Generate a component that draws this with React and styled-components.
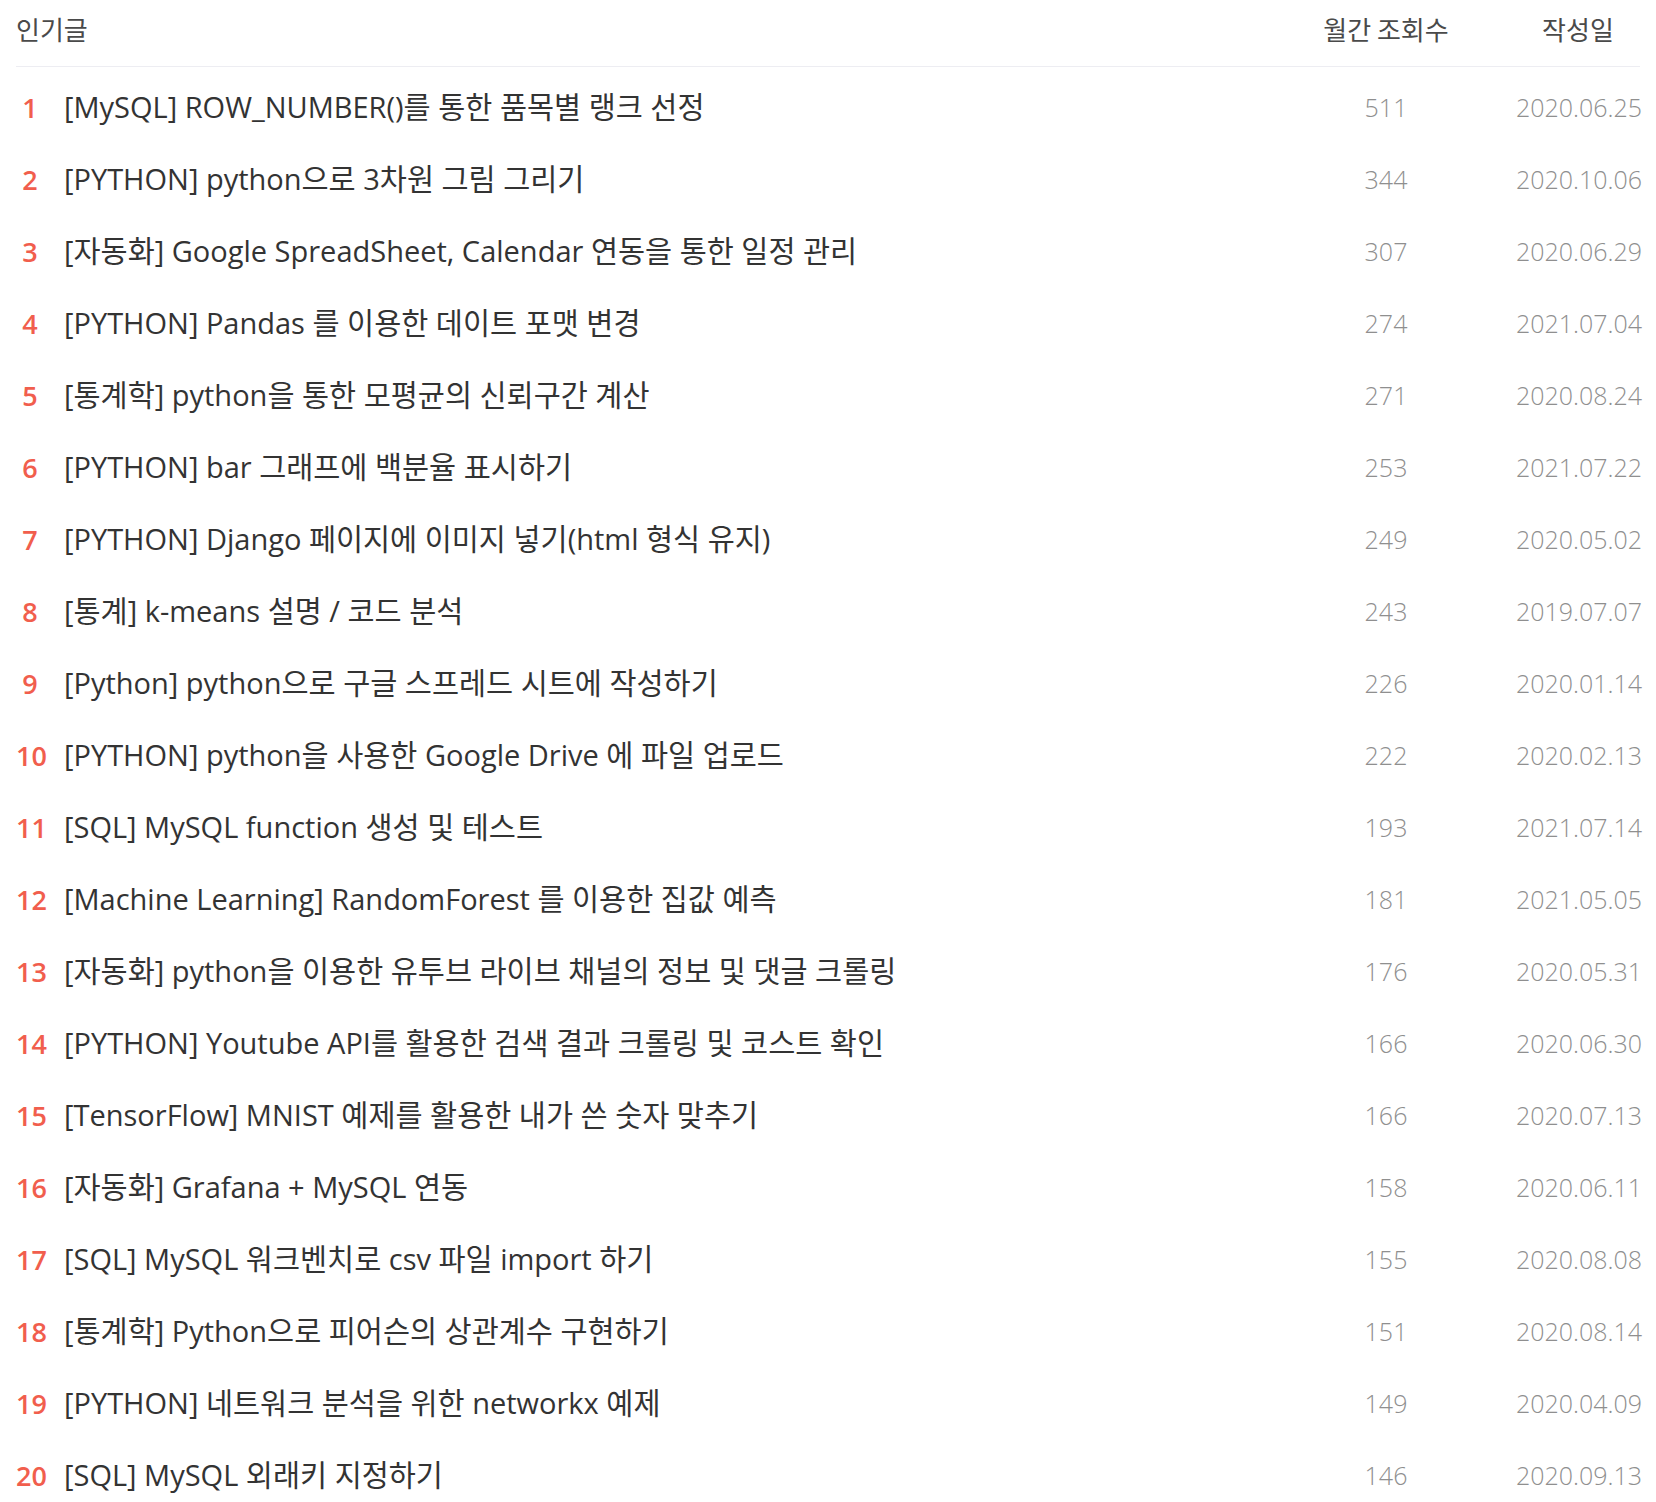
import React from 'react';
import styled, { createGlobalStyle } from 'styled-components';

const GlobalStyle = createGlobalStyle`
  body {
    margin: 0;
    background: #fff;
    font-family: "Open Sans", "Noto Sans CJK KR", sans-serif;
  }
`;

const posts = [
  ['[MySQL] ROW_NUMBER()를 통한 품목별 랭크 선정', 511, '2020.06.25'],
  ['[PYTHON] python으로 3차원 그림 그리기', 344, '2020.10.06'],
  ['[자동화] Google SpreadSheet, Calendar 연동을 통한 일정 관리', 307, '2020.06.29'],
  ['[PYTHON] Pandas 를 이용한 데이트 포맷 변경', 274, '2021.07.04'],
  ['[통계학] python을 통한 모평균의 신뢰구간 계산', 271, '2020.08.24'],
  ['[PYTHON] bar 그래프에 백분율 표시하기', 253, '2021.07.22'],
  ['[PYTHON] Django 페이지에 이미지 넣기(html 형식 유지)', 249, '2020.05.02'],
  ['[통계] k-means 설명 / 코드 분석', 243, '2019.07.07'],
  ['[Python] python으로 구글 스프레드 시트에 작성하기', 226, '2020.01.14'],
  ['[PYTHON] python을 사용한 Google Drive 에 파일 업로드', 222, '2020.02.13'],
  ['[SQL] MySQL function 생성 및 테스트', 193, '2021.07.14'],
  ['[Machine Learning] RandomForest 를 이용한 집값 예측', 181, '2021.05.05'],
  ['[자동화] python을 이용한 유투브 라이브 채널의 정보 및 댓글 크롤링', 176, '2020.05.31'],
  ['[PYTHON] Youtube API를 활용한 검색 결과 크롤링 및 코스트 확인', 166, '2020.06.30'],
  ['[TensorFlow] MNIST 예제를 활용한 내가 쓴 숫자 맞추기', 166, '2020.07.13'],
  ['[자동화] Grafana + MySQL 연동', 158, '2020.06.11'],
  ['[SQL] MySQL 워크벤치로 csv 파일 import 하기', 155, '2020.08.08'],
  ['[통계학] Python으로 피어슨의 상관계수 구현하기', 151, '2020.08.14'],
  ['[PYTHON] 네트워크 분석을 위한 networkx 예제', 149, '2020.04.09'],
  ['[SQL] MySQL 외래키 지정하기', 146, '2020.09.13'],
];

const Board = styled.div`
  padding: 0 16px;
`;

const Head = styled.div`
  display: grid;
  grid-template-columns: 1fr 260px 124px;
  align-items: center;
  padding: 12px 0 20px;
  border-bottom: 1px solid #ededf2;
  color: #4a4a4a;
  font-family: "Noto Sans CJK KR", sans-serif;
  font-size: 26px;
  font-weight: 400;
  line-height: 34px;
`;

const HeadCell = styled.div`
  text-align: ${(p) => (p.center ? 'center' : 'left')};
  white-space: nowrap;
`;

const List = styled.ol`
  list-style: none;
  margin: 0;
  padding: 4px 0 0;
`;

const Row = styled.li`
  display: grid;
  grid-template-columns: 48px 1fr 260px 124px;
  align-items: center;
  height: 72px;
`;

const Rank = styled.span`
  padding-right: 20px;
  text-align: center;
  color: #f15e4d;
  font-size: 27px;
  font-weight: 600;
  white-space: nowrap;
`;

const Title = styled.span`
  color: #333;
  font-size: 29px;
  font-weight: 400;
  line-height: 40px;
  white-space: nowrap;
`;

// Hangul runs get their own face, a touch larger, like the reference's Korean font
const Hangul = styled.span`
  font-family: "Noto Sans CJK KR", sans-serif;
  font-size: 1.015em;
  font-weight: 400;
  line-height: 1;
`;

const Meta = styled.span`
  text-align: center;
  color: #8f8f8f;
  font-size: 25px;
  font-weight: 300;
  white-space: nowrap;
`;

const splitHangul = (text) =>
  text.split(/([가-힣]+)/).map((part, i) =>
    /[가-힣]/.test(part) ? <Hangul key={i}>{part}</Hangul> : part
  );

export default function App() {
  return (
    <>
      <GlobalStyle />
      <Board>
        <Head>
          <HeadCell>인기글</HeadCell>
          <HeadCell center>월간 조회수</HeadCell>
          <HeadCell center>작성일</HeadCell>
        </Head>
        <List>
          {posts.map(([title, views, date], i) => (
            <Row key={i}>
              <Rank>{i + 1}</Rank>
              <Title>{splitHangul(title)}</Title>
              <Meta>{views}</Meta>
              <Meta>{date}</Meta>
            </Row>
          ))}
        </List>
      </Board>
    </>
  );
}
